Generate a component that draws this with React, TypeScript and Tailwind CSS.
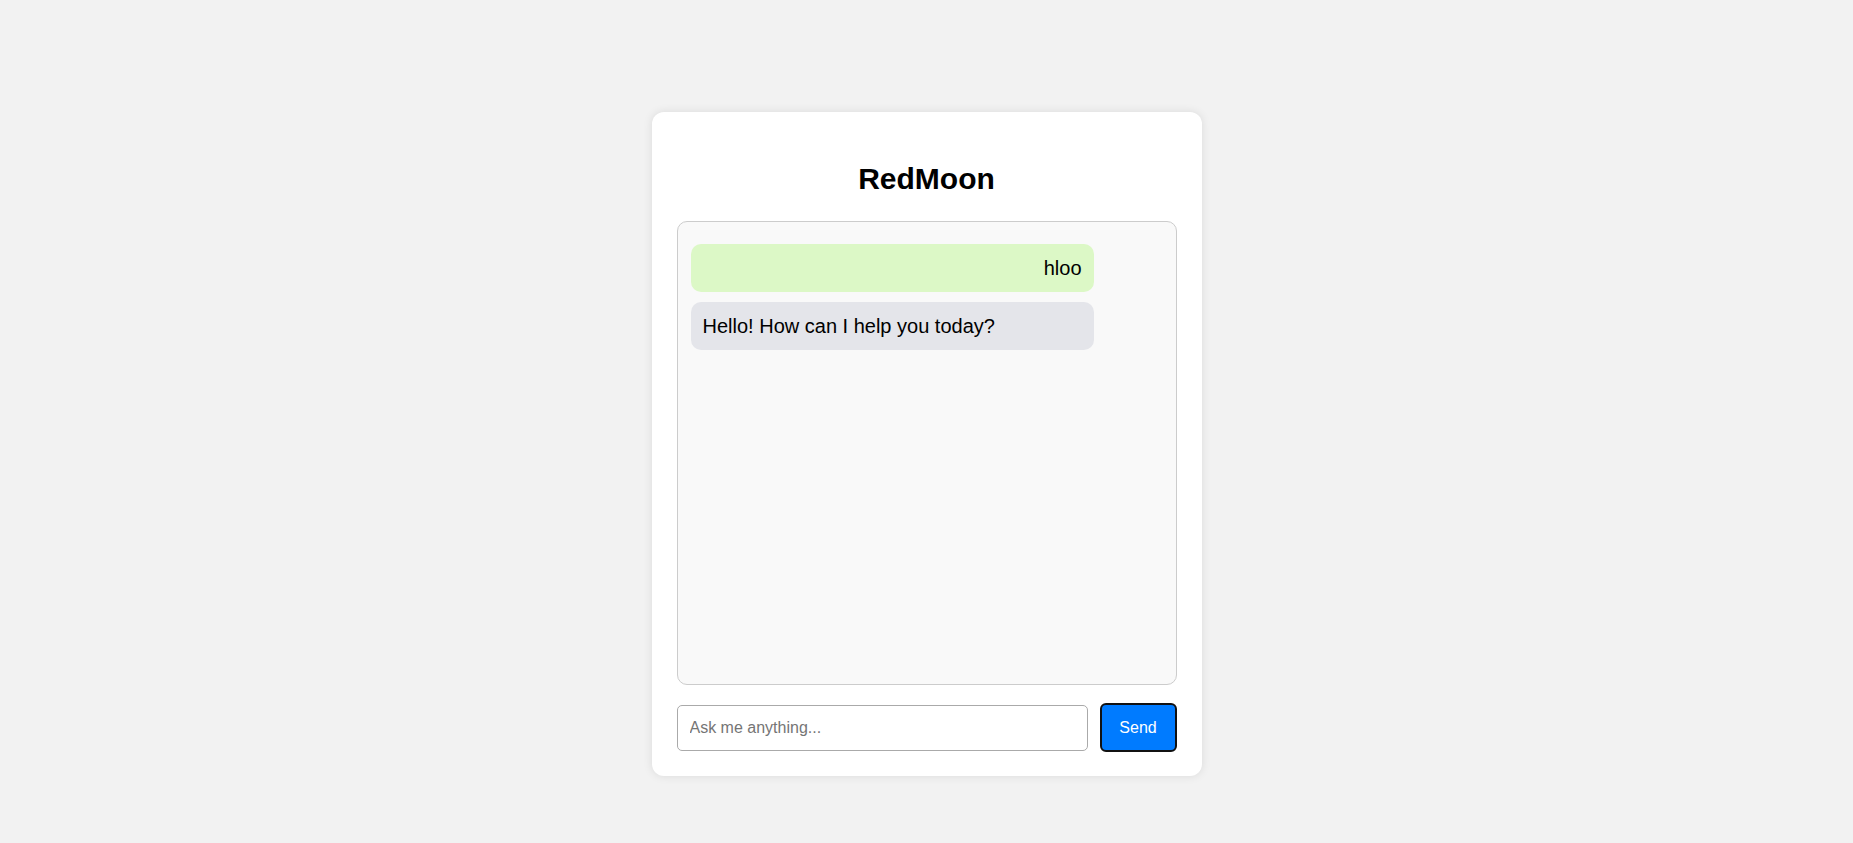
import React from 'react';

const messages = [
  { from: 'user', text: 'hloo' },
  { from: 'bot', text: 'Hello! How can I help you today?' },
];

export default function App() {
  return (
    <div
      className="min-h-screen bg-[#f2f2f2] pt-[112px] flex justify-center"
      style={{ fontFamily: '"Liberation Sans", Arial, sans-serif' }}
    >
      <div className="w-[550px] h-[664px] bg-white rounded-[12px] shadow-[0_0_10px_rgba(0,0,0,0.1)] px-[25px] pt-[25px] pb-6 flex flex-col">
        <h1 className="mt-6 mb-[25px] text-center text-[30px] leading-[35px] font-bold text-black">RedMoon</h1>

        <div className="h-[464px] border border-[#cccccc] rounded-[10px] bg-[#f9f9f9] pl-[13px] pr-3 py-3 overflow-y-auto">
          {messages.map((m, i) => (
            <div
              key={i}
              className={`w-[403px] mt-[10px] mb-[10px] rounded-[10px] px-3 py-3 text-[20px] leading-6 text-black ${
                m.from === 'user' ? 'bg-[#dcf8c6] text-right' : 'bg-[#e4e5ea] text-left'
              }`}
            >
              {m.text}
            </div>
          ))}
        </div>

        <div className="mt-[18px] flex items-center gap-3">
          <input
            type="text"
            placeholder="Ask me anything..."
            className="flex-1 h-[46px] border border-[#aaaaaa] rounded-[5px] px-3 text-[16px] text-black placeholder:text-[#757575] outline-none bg-white"
          />
          <button className="w-[77px] h-[49px] bg-[#007bff] text-white text-[16px] rounded-[6px] border-2 border-[#111111]">
            Send
          </button>
        </div>
      </div>
    </div>
  );
}
